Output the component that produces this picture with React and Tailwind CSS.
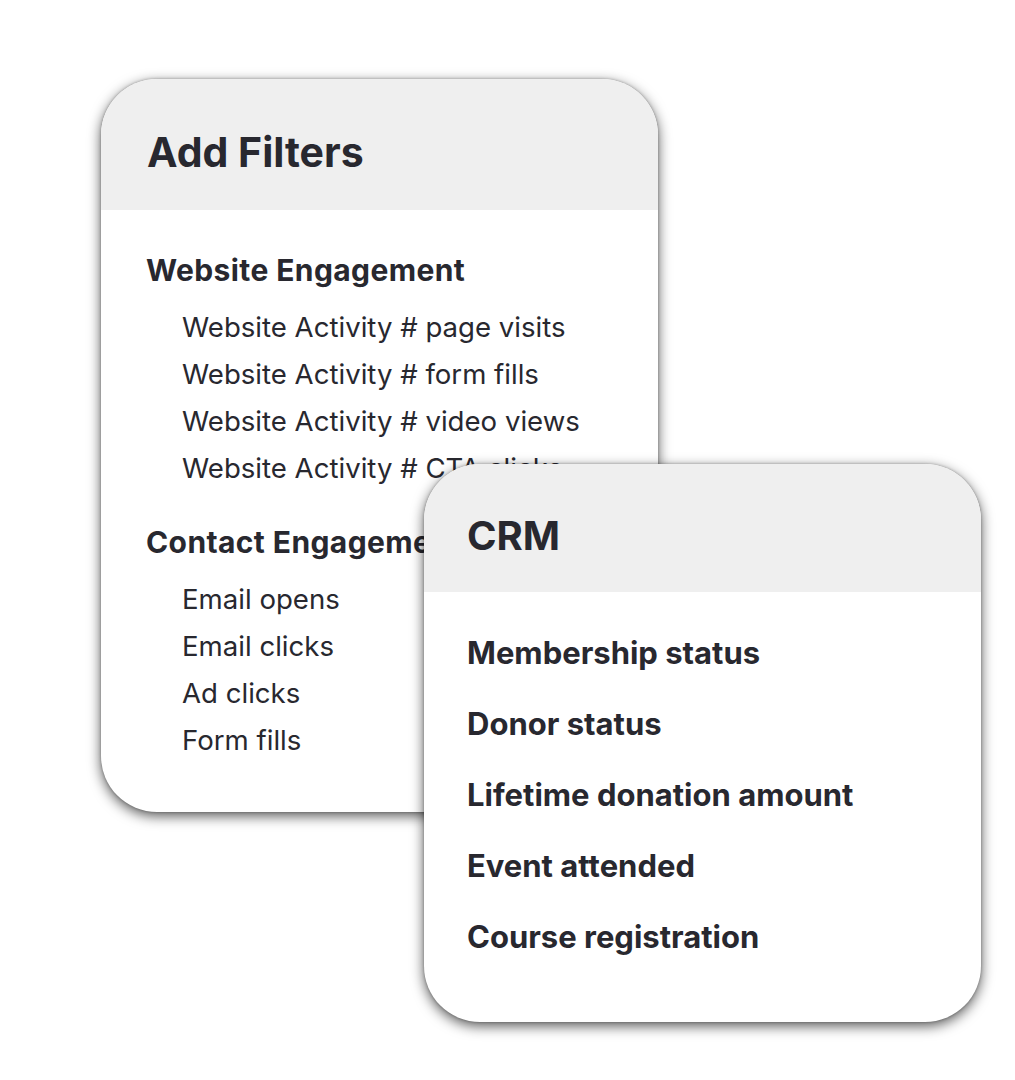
export default function App() {
  const web = [
    "Website Activity # page visits",
    "Website Activity # form fills",
    "Website Activity # video views",
    "Website Activity # CTA clicks",
  ];
  const contact = ["Email opens", "Email clicks", "Ad clicks", "Form fills"];
  const crm = [
    "Membership status",
    "Donor status",
    "Lifetime donation amount",
    "Event attended",
    "Course registration",
  ];
  return (
    <div
      className="relative w-[1015px] h-[1080px] bg-white overflow-hidden text-[#28282f]"
      style={{ fontFamily: "Inter, 'Noto Sans', sans-serif" }}
    >
      <div className="ml-[101px] mt-[79px] w-[557px] h-[733px] rounded-[56px] bg-white overflow-hidden shadow-[0_4px_13px_rgba(0,0,0,0.65),0_0_3px_rgba(0,0,0,0.3)]">
        <div className="h-[131px] bg-[#efefef] flex items-center pl-[46px] pt-[16px]">
          <h1 className="text-[41px] font-bold leading-none">Add Filters</h1>
        </div>
        <div className="pl-[45px] pt-[42px]">
          <h2 className="text-[30px] font-bold leading-[36px] tracking-[0.4px]">Website Engagement</h2>
          <ul className="pl-[36px] mt-[16px]">
            {web.map((t) => (
              <li key={t} className="text-[27.6px] leading-[47px]">{t}</li>
            ))}
          </ul>
          <h2 className="text-[30px] font-bold leading-[36px] mt-[32px] tracking-[0.4px] whitespace-nowrap">Contact Engagement</h2>
          <ul className="pl-[36px] mt-[16px]">
            {contact.map((t) => (
              <li key={t} className="text-[27.6px] leading-[47px]">{t}</li>
            ))}
          </ul>
        </div>
      </div>
      <div className="absolute left-[424px] top-[464px] w-[557px] h-[558px] rounded-[56px] bg-white overflow-hidden shadow-[0_4px_13px_rgba(0,0,0,0.65),0_0_3px_rgba(0,0,0,0.3)]">
        <div className="h-[128px] bg-[#efefef] flex items-center pl-[43px] pt-[16px]">
          <h1 className="text-[40px] font-bold leading-none">CRM</h1>
        </div>
        <ul className="pl-[43px] pt-[25px]">
          {crm.map((t) => (
            <li key={t} className="text-[31px] font-bold leading-[71px]">{t}</li>
          ))}
        </ul>
      </div>
    </div>
  );
}
